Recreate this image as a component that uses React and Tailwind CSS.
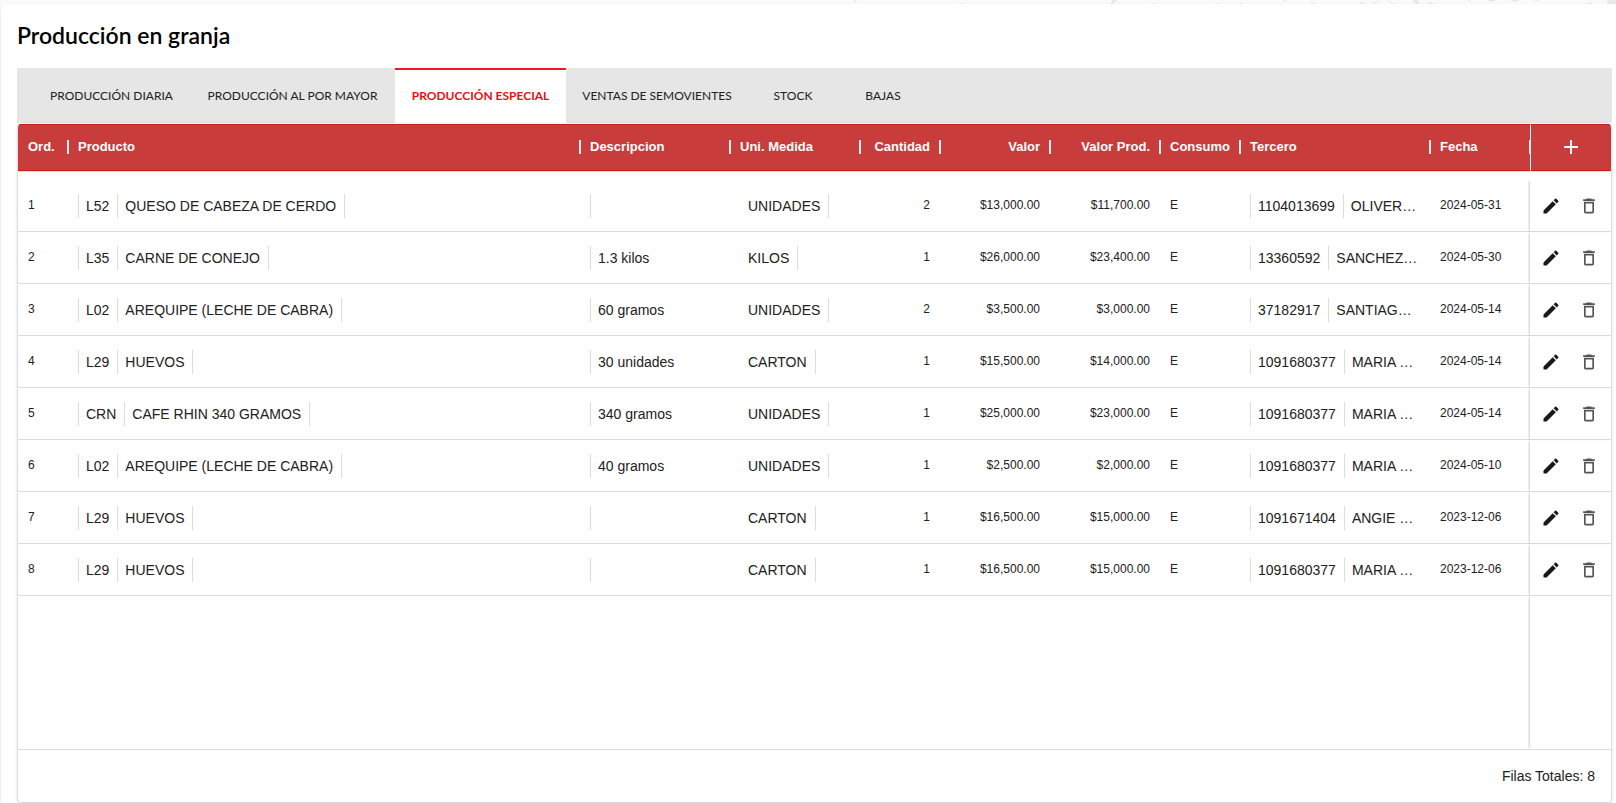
import React from 'react';
import { MdAdd, MdDeleteOutline, MdEdit } from 'react-icons/md';

const tabs = [
    { label: 'Producción diaria', width: 'min-w-[157px]' },
    { label: 'Producción al por mayor', width: 'min-w-[205px]' },
    { label: 'Producción especial', width: 'min-w-[171px]', active: true },
    { label: 'Ventas de semovientes', width: 'min-w-[182px]' },
    { label: 'Stock', width: 'min-w-[90px]' },
    { label: 'Bajas', width: 'min-w-[90px]' },
];

const columns = [
    { label: 'Ord.', width: 'w-[50px]' },
    { label: 'Producto', width: '' },
    { label: 'Descripcion', width: 'w-[150px]' },
    { label: 'Uni. Medida', width: 'w-[130px]' },
    { label: 'Cantidad', width: 'w-[80px]', right: true },
    { label: 'Valor', width: 'w-[110px]', right: true },
    { label: 'Valor Prod.', width: 'w-[110px]', right: true },
    { label: 'Consumo', width: 'w-[80px]' },
    { label: 'Tercero', width: 'w-[190px]' },
    { label: 'Fecha', width: 'w-[100px]' },
];

const rows = [
    { code: 'L52', product: 'QUESO DE CABEZA DE CERDO', desc: '', unit: 'UNIDADES', qty: 2, value: '$13,000.00', prod: '$11,700.00', id: '1104013699', name: 'OLIVER…', date: '2024-05-31' },
    { code: 'L35', product: 'CARNE DE CONEJO', desc: '1.3 kilos', unit: 'KILOS', qty: 1, value: '$26,000.00', prod: '$23,400.00', id: '13360592', name: 'SANCHEZ…', date: '2024-05-30' },
    { code: 'L02', product: 'AREQUIPE (LECHE DE CABRA)', desc: '60 gramos', unit: 'UNIDADES', qty: 2, value: '$3,500.00', prod: '$3,000.00', id: '37182917', name: 'SANTIAG…', date: '2024-05-14' },
    { code: 'L29', product: 'HUEVOS', desc: '30 unidades', unit: 'CARTON', qty: 1, value: '$15,500.00', prod: '$14,000.00', id: '1091680377', name: 'MARIA …', date: '2024-05-14' },
    { code: 'CRN', product: 'CAFE RHIN 340 GRAMOS', desc: '340 gramos', unit: 'UNIDADES', qty: 1, value: '$25,000.00', prod: '$23,000.00', id: '1091680377', name: 'MARIA …', date: '2024-05-14' },
    { code: 'L02', product: 'AREQUIPE (LECHE DE CABRA)', desc: '40 gramos', unit: 'UNIDADES', qty: 1, value: '$2,500.00', prod: '$2,000.00', id: '1091680377', name: 'MARIA …', date: '2024-05-10' },
    { code: 'L29', product: 'HUEVOS', desc: '', unit: 'CARTON', qty: 1, value: '$16,500.00', prod: '$15,000.00', id: '1091671404', name: 'ANGIE …', date: '2023-12-06' },
    { code: 'L29', product: 'HUEVOS', desc: '', unit: 'CARTON', qty: 1, value: '$16,500.00', prod: '$15,000.00', id: '1091680377', name: 'MARIA …', date: '2023-12-06' },
];

// Lower edge of the page's background drawing
function Backdrop() {
    return (
        <svg aria-hidden="true" viewBox="0 0 776 4" className="ml-auto block h-1 w-[776px]" fill="#e8e8e8">
            <path d="M14 0h3l-3 3zM119 3h3v1h-3zM273 0h4l-4 4h-3zM311 3h3v1h-3zM375 3h3v1h-3zM399 1l4 3h-2zM443 0h4l-3 2zM471 2l4 2h-4zM520 1l5 3h-4zM533 2l8-2-8 4zM546 0l9 4h-3zM572 0h5l3 4h-4zM589 2l7 2h-7zM627 0h4l-2 1zM647 0h9l-4 2zM670 0h9l-4 2zM693 0h7l-4 1zM747 3h6v1h-6zM768 0h8v4h-9z" />
        </svg>
    );
}

// Values split by thin vertical rules
function Pieces({ items, left = true, right = true }) {
    return (
        <div className={`mt-0.5 inline-flex h-6 max-w-full border-l align-middle text-sm leading-6 ${left ? 'border-[#dddddd]' : 'border-transparent'}`}>
            {items.map((item, i) => (
                <span
                    key={i}
                    className={`whitespace-nowrap pl-[7px] pr-2 ${right || i < items.length - 1 ? 'border-r border-[#dddddd]' : ''}`}
                >
                    {item}
                </span>
            ))}
        </div>
    );
}

function Row({ row, ord }) {
    const cell = 'h-[52px] border-b border-[#dddddd] px-[10px] pb-px';
    return (
        <tr>
            <td className={cell}>{ord}</td>
            <td className={cell}><Pieces items={[row.code, row.product]} /></td>
            <td className={cell}><Pieces items={[row.desc]} right={false} /></td>
            <td className={cell}><Pieces items={[row.unit]} left={false} /></td>
            <td className={`${cell} text-right`}>{row.qty}</td>
            <td className={`${cell} text-right`}>{row.value}</td>
            <td className={`${cell} text-right`}>{row.prod}</td>
            <td className={cell}>E</td>
            <td className={cell}><Pieces items={[row.id, row.name]} right={false} /></td>
            <td className={cell}>{row.date}</td>
            <td className="h-[52px] border-b border-[#dddddd] p-0 shadow-[-2px_0_2px_-1px_rgba(0,0,0,0.2)]">
                <div className="flex items-center pl-0.5">
                    <button type="button" aria-label="Editar" className="flex w-[38px] justify-center text-[#1a1a1a]">
                        <MdEdit className="h-5 w-5" />
                    </button>
                    <button type="button" aria-label="Eliminar" className="flex w-[38px] justify-center text-[#555555]">
                        <MdDeleteOutline className="h-5 w-5" />
                    </button>
                </div>
            </td>
        </tr>
    );
}

export default function App() {
    return (
        <div className="flex min-h-screen flex-col bg-[#fafafa] pl-px font-['Liberation_Sans',Arial,sans-serif] text-[#212121]">
            <Backdrop />
            <main className="flex flex-1 flex-col rounded-tl bg-white pl-4 pr-1 shadow">
                <h1 className="pb-[17px] pt-[15px] font-['Lato',sans-serif] text-[23px] font-semibold leading-8 text-black">
                    Producción en granja
                </h1>

                {/* Tabs */}
                <div role="tablist" className="flex h-[55px] bg-[#e6e6e6] pl-4 font-['Lato',sans-serif] text-xs">
                    {tabs.map((tab) => (
                        <button
                            key={tab.label}
                            type="button"
                            role="tab"
                            aria-selected={!!tab.active}
                            className={`border-t-2 px-2 pb-0.5 uppercase ${tab.width} ${tab.active
                                ? 'border-[#ed1c24] bg-white font-bold text-[#e60f14]'
                                : 'border-transparent text-[#212121]'
                            }`}
                        >
                            {tab.label}
                        </button>
                    ))}
                </div>

                {/* Grid */}
                <div className="mt-px flex flex-1 flex-col overflow-hidden rounded border border-t-0 border-[#dddddd] shadow-[0_0_3px_rgba(0,0,0,0.12)]">
                    <table className="w-full table-fixed border-separate border-spacing-0 text-xs">
                        <thead>
                            <tr className="bg-[#c93c3c] text-[13px] text-white">
                                {columns.map((col) => (
                                    <th key={col.label} className={`h-[47px] border-y border-[#c81e20] p-0 pb-px ${col.width}`}>
                                        <div className="flex items-center pl-[10px]">
                                            <span className={`flex-1 whitespace-nowrap pr-[9px] ${col.right ? 'text-right' : 'text-left'}`}>
                                                {col.label}
                                            </span>
                                            <span className="-mr-px h-3.5 w-0.5 bg-[#eeeeee]" />
                                        </div>
                                    </th>
                                ))}
                                <th className="w-[81px] border-y border-l border-y-[#c81e20] border-l-white p-0 pb-px">
                                    <button type="button" aria-label="Agregar" className="flex w-full justify-center">
                                        <MdAdd className="h-6 w-6" />
                                    </button>
                                </th>
                            </tr>
                        </thead>
                        <tbody>
                            <tr aria-hidden="true">
                                <td colSpan={11} className="h-[9px] border-t border-[#e0e0e0] p-0" />
                            </tr>
                            {rows.map((row, i) => (
                                <Row key={i} row={row} ord={i + 1} />
                            ))}
                        </tbody>
                    </table>
                    <div className="flex flex-1 justify-end overflow-hidden">
                        <div className="w-[81px] shadow-[-2px_0_2px_-1px_rgba(0,0,0,0.2)]" />
                    </div>
                    <footer className="flex h-[53px] items-center justify-end border-t border-[#dddddd] pr-4 text-sm">
                        Filas Totales: 8
                    </footer>
                </div>
            </main>
        </div>
    );
}
